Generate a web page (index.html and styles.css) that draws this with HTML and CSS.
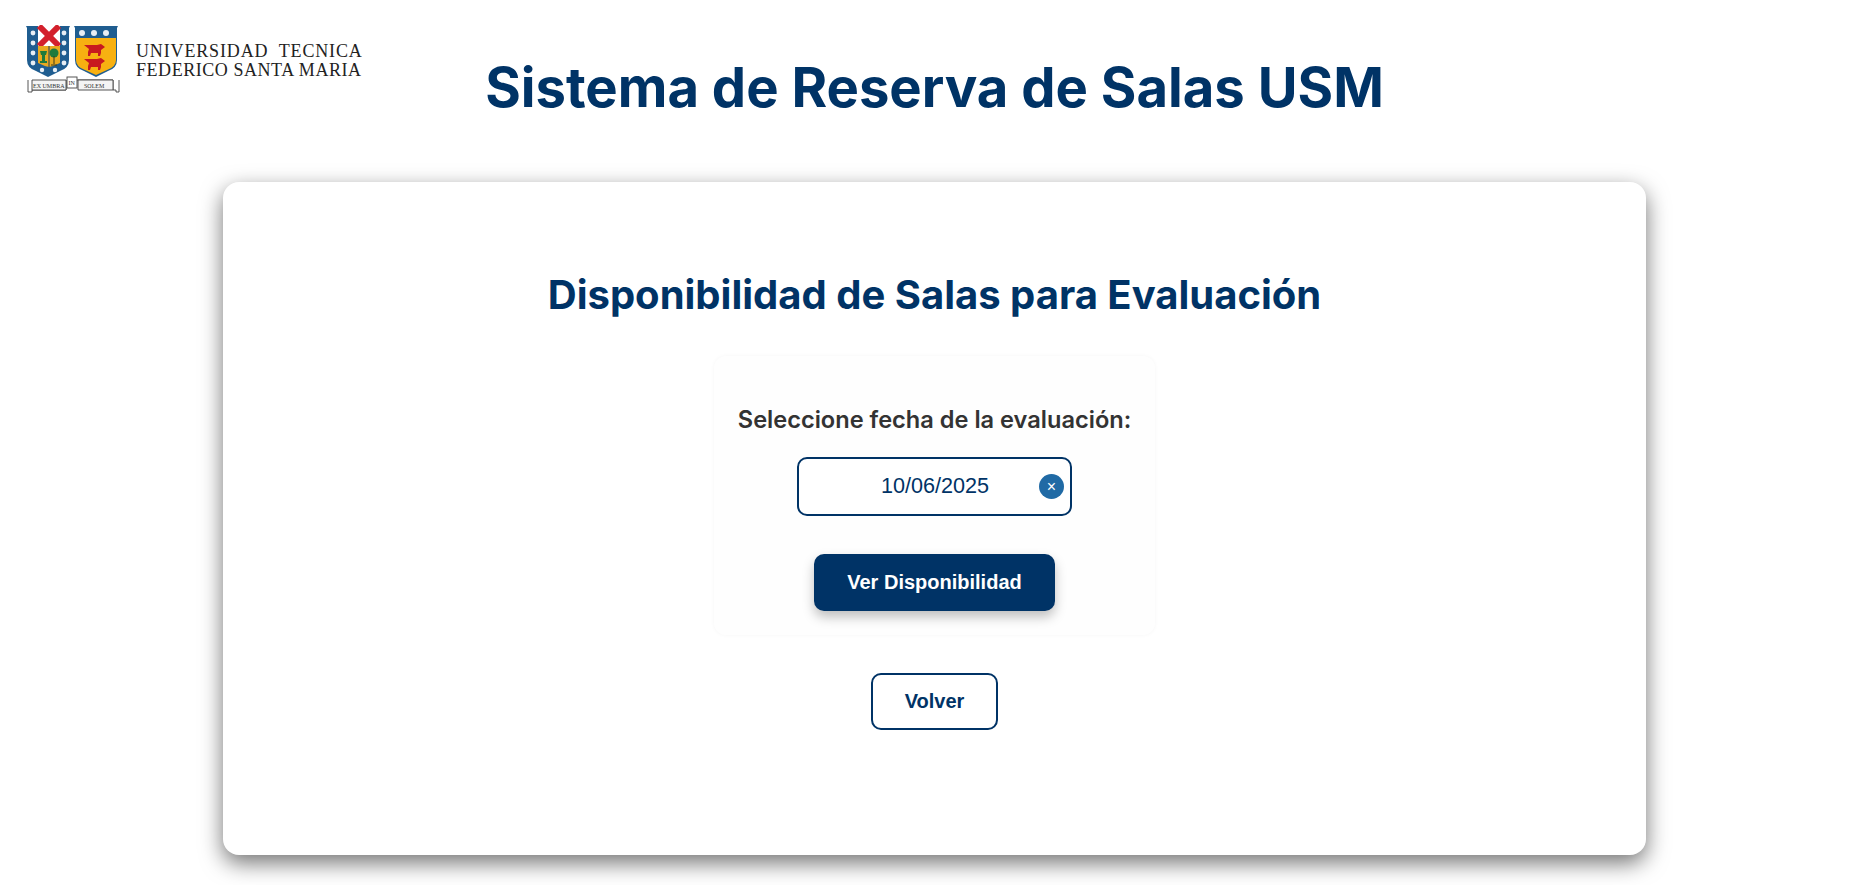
FILE: index.html
```html
<!DOCTYPE html>
<html lang="es">
<head>
    <meta charset="UTF-8">
    <meta name="viewport" content="width=device-width, initial-scale=1.0">
    <title>Sistema de Reserva de Salas USM</title>

    <link rel="stylesheet" href="styles.css">
</head>
<body>

    <header class="top-bar">
        <div class="logo">
            <svg class="crest" width="95" height="70" viewBox="0 0 95 70">
                <!-- left shield -->
                <path d="M1 1H45L44 3V35Q44 43 35 46L23 52L11 46Q2 43 2 35V3Z" fill="#1f5d90"/>
                <rect x="13" y="1" width="22" height="20" fill="#fff"/>
                <path d="M14 1L34 21M34 1L14 21" stroke="#d3202c" stroke-width="6"/>
                <path d="M13 21H35V38Q29 41 24 42Q19 41 13 38Z" fill="#e9a91f"/>
                <path d="M24 21V42" stroke="#1f3f5c" stroke-width="1"/>
                <path d="M15 26H22L21 30H20V36H22V38H15V36H17V30H16Z" fill="#1e7a3c"/>
                <circle cx="29" cy="28" r="4.5" fill="#1e7a3c"/>
                <path d="M29 31V39M26 40H32" stroke="#3a3a1a" stroke-width="1"/>
                <g fill="#e8eef4">
                    <circle cx="8" cy="8" r="2.4"/><circle cx="8" cy="18" r="2.4"/><circle cx="8" cy="28" r="2.4"/><circle cx="8" cy="38" r="2.4"/>
                    <circle cx="39" cy="8" r="2.4"/><circle cx="39" cy="18" r="2.4"/><circle cx="39" cy="28" r="2.4"/><circle cx="39" cy="38" r="2.4"/>
                    <circle cx="17" cy="45" r="2.2"/><circle cx="30" cy="45" r="2.2"/>
                </g>
                <!-- right shield -->
                <path d="M49 1H93L92 3V35Q92 43 83 46L71 52L59 46Q50 43 50 35V3Z" fill="#1f5d90"/>
                <path d="M51 13H91V35Q91 42 82 45L71 50L60 45Q51 42 51 35Z" fill="#f7b011"/>
                <g fill="#e8eef4">
                    <circle cx="57" cy="8" r="3"/><circle cx="69" cy="8" r="3"/><circle cx="81" cy="8" r="3"/>
                </g>
                <g fill="#c8181f">
                    <path d="M59 20H72L76 19L80 22L76 25V28L75 31H73V28H66L65 31H63V27L64 24Z"/>
                    <path d="M59 34H72L76 33L80 36L76 39V42L75 45H73V42H66L65 45H63V41L64 38Z"/>
                </g>
                <!-- motto ribbon -->
                <path d="M3 55V67H7V65H41V55M52 55H88V65H91V67H94V55" fill="#fff" stroke="#444" stroke-width="0.9"/>
                <path d="M7 55H41V65H7ZM53 55H88V65H53Z" fill="#f4f4f4" stroke="#444" stroke-width="0.9"/>
                <rect x="42" y="52" width="10" height="11" fill="#fff" stroke="#444" stroke-width="0.9"/>
                <text class="motto" x="8" y="62.5">EX UMBRA</text>
                <text class="motto" x="43.5" y="60">IN</text>
                <text class="motto" x="59" y="62.5">SOLEM</text>
            </svg>
            <div class="logo-text">
                <span class="line-one">UNIVERSIDAD&nbsp; TECNICA</span>
                <span class="line-two">FEDERICO SANTA MARIA</span>
            </div>
        </div>
        <h1>Sistema de Reserva de Salas USM</h1>
    </header>

    <main class="card">
        <h2>Disponibilidad de Salas para Evaluación</h2>

        <form class="date-form">
            <label for="fecha">Seleccione fecha de la evaluación:</label>
            <div class="date-field">
                <input type="text" id="fecha" value="10/06/2025">
                <span class="clear-btn">×</span>
            </div>
            <button type="button" class="btn-primary">Ver Disponibilidad</button>
        </form>

        <button type="button" class="btn-back">Volver</button>
    </main>

</body>
</html>
```

FILE: styles.css
```css
/* General body styling */
body {
    font-family: Inter, "Liberation Sans", sans-serif;
    background-color: #fff;
    margin: 0;
    height: 885px;
    overflow: hidden;
}

.top-bar {
    display: grid;
    grid-template-columns: 1fr auto 1fr;
    height: 182px;
}

.logo {
    display: flex;
    align-items: flex-start;
    gap: 16px;
    padding: 25px 0 0 25px;
}

.motto {
    font-family: "Liberation Serif", serif;
    font-size: 6px;
    fill: #333;
}

.logo-text {
    display: flex;
    flex-direction: column;
    margin-top: 17px;
    font-family: "Liberation Serif", serif;
    font-size: 18px;
    line-height: 19px;
    color: #222;
    white-space: nowrap;
}

.line-one {
    letter-spacing: 0.85px;
}

.line-two {
    letter-spacing: 0.55px;
}

h1 {
    margin: 53px 0 0;
    color: #003366;
    font-size: 54.4px;
    font-weight: 700;
    line-height: 68px;
    white-space: nowrap;
}

.card {
    width: 1423px;
    height: 673px;
    margin: 0 auto;
    background: #fff;
    border-radius: 16px;
    box-shadow: 0 8px 22px rgba(0, 0, 0, 0.55);
    display: flex;
    flex-direction: column;
    align-items: center;
    box-sizing: border-box;
    padding-top: 86px;
}

h2 {
    margin: 0 0 34px;
    color: #003366;
    font-size: 40px;
    font-weight: 700;
    line-height: 54px;
}

.date-form {
    width: 441px;
    height: 279px;
    box-sizing: border-box;
    background: #fefefe;
    border-radius: 12px;
    display: flex;
    flex-direction: column;
    align-items: center;
    padding-top: 48px;
    box-shadow: 0 0 4px rgba(0, 0, 0, 0.04);
}

label {
    color: #333;
    font-size: 23.6px;
    font-weight: 600;
    line-height: 32px;
    margin-bottom: 21px;
}

.date-field {
    width: 275px;
    height: 59px;
    box-sizing: border-box;
    border: 2px solid #003366;
    border-radius: 10px;
    background: #fff;
    display: flex;
    align-items: center;
    padding-right: 6px;
    margin-bottom: 38px;
}

.date-field input {
    flex: 1;
    min-width: 0;
    border: none;
    outline: none;
    background: none;
    padding: 0 0 2px 32px;
    text-align: center;
    font-family: "Liberation Sans", Arial, sans-serif;
    font-size: 21.6px;
    color: #003366;
}

.clear-btn {
    width: 25px;
    height: 25px;
    border-radius: 50%;
    background: #206aa5;
    color: #fff;
    font-family: "Liberation Sans", Arial, sans-serif;
    font-size: 16px;
    line-height: 26px;
    text-align: center;
}

button {
    font-family: "Liberation Sans", Arial, sans-serif;
    font-size: 20px;
    font-weight: 700;
    cursor: pointer;
    border-radius: 10px;
}

.btn-primary {
    width: 241px;
    height: 57px;
    border: none;
    background-color: #003366;
    color: #fff;
    box-shadow: 0 6px 12px rgba(0, 0, 0, 0.25);
}

.btn-back {
    width: 127px;
    height: 57px;
    margin-top: 38px;
    border: 2px solid #003366;
    background: #fff;
    color: #003366;
}
```
